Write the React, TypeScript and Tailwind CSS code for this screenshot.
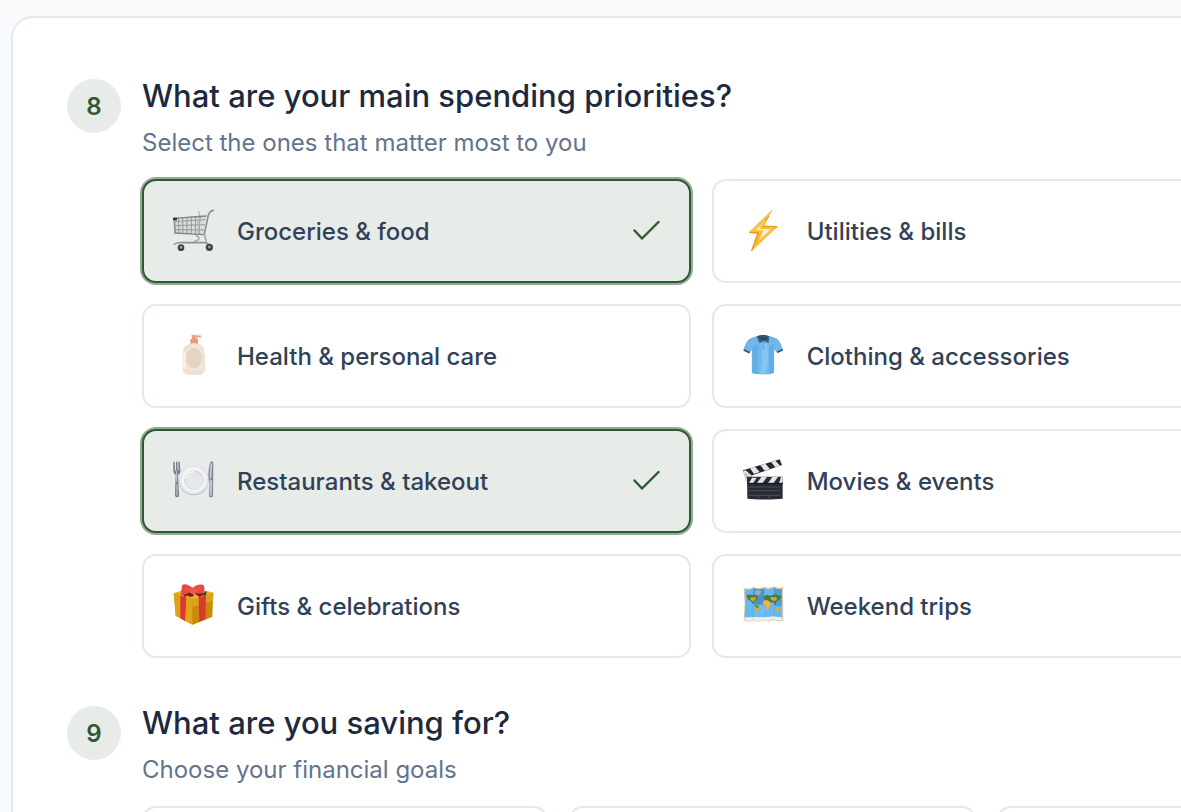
import { useState, type ReactNode } from "react";

const Picture = ({ children }: { children: ReactNode }) => (
	<svg viewBox="36 42 132 132" className="size-11 shrink-0" fill="none" aria-hidden="true">
		{children}
	</svg>
);

const CartIcon = () => (
	<Picture>
		<path d="M43 68 140 61 131 119 45 114Z" fill="#d3d8d3" fillOpacity=".7" />
		<path d="M42 80 137 74M43 92 135 89M44 104 133 105M55 68l2 46M68 67l1 48M81 66v50M94 65v51M107 64l-1 53M120 63l-3 55" stroke="#92999a" strokeWidth="3" />
		<path d="M116 48l4 22-5 48M120 62l-9 28" stroke="#a9b0ae" strokeWidth="3" />
		<path d="M42 70 139 63M44 114 131 119" stroke="#7d8587" strokeWidth="4" />
		<path d="M43 70l2 44M160 46c-7 1-12 6-15 14l-12 58" stroke="#8b9295" strokeWidth="5" strokeLinecap="round" />
		<path d="M107 119c5 6 12 7 10 12-2 6-10 5-14 10M133 118l6 22" stroke="#a3aaa8" strokeWidth="5" />
		<path d="M43 148c5-6 18-6 32-5h57c10 0 14 2 15 11" stroke="#8d9497" strokeWidth="5" strokeLinecap="round" />
		<rect x="39" y="68" width="12" height="8" rx="1" fill="#25305a" />
		<circle cx="63" cy="158" r="10" fill="#41464e" />
		<circle cx="63" cy="157" r="4" fill="#9aa1ab" />
		<circle cx="148" cy="157" r="11" fill="#41464e" />
		<circle cx="148" cy="156" r="4" fill="#9aa1ab" />
	</Picture>
);

const BoltIcon = () => (
	<Picture>
		<path d="M126 46 101 93 142 95 65 167 82 115 57 112Z" fill="#fcc43a" stroke="#e9b64d" strokeWidth="2" strokeLinejoin="round" />
		<path d="M117 63 74 107 94 109 80 147 126 101 93 99Z" fill="#fbd768" stroke="#f0a524" strokeWidth="3" strokeLinejoin="round" />
		<path d="M104 76 76 105 98 106 88 135 124 101 92 100Z" fill="#f6f1e2" />
		<path d="M106 76 90 99 126 102M76 106 97 108 84 143" stroke="#fbc73f" strokeWidth="5" strokeLinejoin="round" />
		<path d="M99 94 142 95M57 112 85 114 65 167" stroke="#e79a1e" strokeWidth="4" strokeLinejoin="round" />
	</Picture>
);

const LotionIcon = () => (
	<Picture>
		<path d="M94 47c0-3 5-3 9-3 9 0 19 0 22 4l-3 6c-3-3-8-3-12-2v9H96v-9Z" fill="#f0a283" />
		<path d="M108 46c7-1 14 0 16 3" stroke="#ffd5b7" strokeWidth="4" strokeLinecap="round" />
		<path d="M91 58c4-3 19-3 23 0v15H91Z" fill="#ee9676" />
		<path d="M83 74c8-6 31-6 39 0 9 5 12 15 12 30v43c0 13-9 18-20 18H88c-12 0-20-5-20-18v-43c0-15 4-25 15-30Z" fill="#f1e5d9" />
		<path d="M72 97c3-14 10-20 20-21M133 103v43c0 10-7 17-20 18" stroke="#dfcebc" strokeWidth="2" />
		<ellipse cx="102" cy="114" rx="24" ry="31" fill="#e5d4c6" />
		<path d="M77 148c14 10 36 12 50 0v7c-8 9-42 9-50 0Z" fill="#ebdccd" />
		<path d="M100 103v8M92 136l5-1M104 151h7" stroke="#d8dcdc" strokeWidth="3" />
		<path d="M73 97v48" stroke="#fbf3e9" strokeWidth="5" />
	</Picture>
);

const ShirtIcon = () => (
	<Picture>
		<path d="M82 49 58 58C49 66 45 80 41 91l17 7 9-13v73c14 5 51 5 64 0V84l11 14 16-8c-6-14-9-27-18-33l-23-8Z" fill="#70b7ec" stroke="#559acf" strokeWidth="2" />
		<path d="M67 83v75l15 3 2-92ZM117 85l14-15v88l-13 3Z" fill="#62aee6" />
		<path d="M95 68l16 2 4 46-6 45H90l6-28Z" fill="#83c6f5" />
		<path d="M42 90l17 8M142 97l16-8" stroke="#30536f" strokeWidth="5" />
		<path d="M81 49c9-5 29-5 36 0l-2 18-14-5-12 7Z" fill="#345571" />
		<path d="M86 52c8 4 20 4 27 0l-11 8Z" fill="#1f3d56" />
		<path d="M82 51l7 15 12-5M116 51l-2 15-13-5" stroke="#426d91" strokeWidth="4" />
		<path d="M100 64v25" stroke="#4c91c6" strokeWidth="3" />
		<path d="M99 74h2M99 86h2M100 104h2M91 116h2" stroke="#ead9a9" strokeWidth="2" />
	</Picture>
);

const PlateIcon = () => (
	<Picture>
		<circle cx="101" cy="106" r="45" fill="#b8bcc4" />
		<circle cx="101" cy="104" r="44" fill="#e7e8ed" />
		<circle cx="101" cy="104" r="37" fill="#f4f4f7" />
		<circle cx="102" cy="105" r="29" fill="#d0d2d9" />
		<circle cx="103" cy="107" r="26" fill="#e6e7ec" />
		<path d="M77 101c2-14 13-21 26-21" stroke="#fff" strokeWidth="4" />
		<path d="M40 50v26c0 8 4 11 7 13l-2 61c0 9 12 9 12 0l-3-61c6-2 8-6 7-13l-2-26h-4l1 26h-3l-1-26h-4v26h-3l-1-26Z" fill="#737c88" />
		<path d="M48 76l2 10v25M51 117v35" stroke="#cdd3dc" strokeWidth="3" />
		<path d="M149 58c2-11 11-13 11 0l-1 95c0 5-11 5-12 0l2-42c-6-9-4-34 0-53Z" fill="#7e8895" />
		<path d="M154 55l-3 50 3 5-2 42" stroke="#cbd1d9" strokeWidth="5" />
		<path d="M148 102h10" stroke="#6f7986" strokeWidth="3" />
	</Picture>
);

const ClapperIcon = () => (
	<Picture>
		<path d="M39 76 149 43l7 17L46 98Z" fill="#22262e" />
		<path d="M60 70l15-5 14 16-17 6ZM91 61l15-5 14 16-16 5ZM123 51l14-4 13 15-14 5ZM40 78l7-2 16 14-17 7Z" fill="#e7e7e7" />
		<path d="M40 79l7 31 25-1-9-20Z" fill="#dadada" />
		<path d="M47 85l4 16 13 2" stroke="#a0a2a5" strokeWidth="3" />
		<path d="M51 95h107v66c-25 3-80 3-106 0Z" fill="#272b34" />
		<path d="M94 96h17l-13 18H81ZM127 96h17l-13 18h-17ZM153 96h5v14l-3 4h-8ZM66 98h14l-10 16H57Z" fill="#e4e4e5" />
		<path d="M55 126h96M55 137h96M55 151h96M86 151v9M118 151v9" stroke="#5b616d" strokeWidth="2" />
		<path d="M51 115h107" stroke="#11151d" strokeWidth="3" />
	</Picture>
);

const GiftIcon = () => (
	<Picture>
		<path d="M41 71 97 52l63 17-4 71-58 24-51-27Z" fill="#d7960d" />
		<path d="M47 93 97 108v56l-50-27Z" fill="#e2a21a" />
		<path d="M97 108 157 91v49l-60 24Z" fill="#c88a0b" />
		<path d="M41 69 97 53l63 15-59 20Z" fill="#f0b22b" />
		<path d="M41 70 97 87v23L43 94ZM98 88l62-19-1 23-61 18Z" fill="#dfa11c" />
		<path d="M61 76l17 6v24l-3 47-14-8ZM116 82l22-6-2 72-18 7Z" fill="#dd3733" />
		<path d="M60 71 112 50l15 4-48 25ZM80 56l12-4 44 20-18 8Z" fill="#bd292a" />
		<path d="M66 46c9-8 22 1 32 8 10-12 29-13 33-8 4 10 3 20-3 24-11 4-23 0-31-2-9 8-25 12-32 4-5-8 2-16 1-26Z" fill="#e94843" />
		<path d="M69 74c9 3 17-9 25-7l9 11-14 3-6-5-9 4ZM103 70l16 10 15-8" fill="#6b2423" />
		<path d="M86 59l8-6 14 1 5 10-9 8-13-2Z" fill="#f55550" />
		<path d="M129 69l11-6-1 13-10 1Z" fill="#315a2b" />
		<path d="M75 53l8 6M115 54l8-4" stroke="#f5655b" strokeWidth="3" />
	</Picture>
);

const MapIcon = () => (
	<Picture>
		<path d="M41 53c11 4 21 4 29-2 12 4 22 5 33-1 9 5 20 4 29-1 8 5 18 5 28 2-2 13-2 26-1 37l1 64c-10 3-19 2-29-3-9 5-20 6-29 2-10 5-22 5-32 0-10 5-20 5-29 0l3-50Z" fill="#dcc3a0" />
		<path d="M46 58c9 2 17 1 24-3 12 4 22 4 33 0 9 4 20 3 29-1 8 4 16 4 23 3v85H44l2-41Z" fill="#68b8ed" />
		<path d="M70 55c11 4 22 4 33 0v50c-11 5-22 5-33 0Z" fill="#4a93c9" />
		<path d="M70 104h33v39H70Z" fill="#72bdf0" />
		<path d="M132 54c8 4 16 4 23 3v51h-23Z" fill="#4f9fd6" />
		<path d="M49 76c8-6 17 1 27-1l8 7-4 9-8 2-3 9-7-10-8-3Z" fill="#537b3a" />
		<path d="M60 84l14-3 4 5-10 9-6-7Z" fill="#daac37" />
		<path d="M72 64l14-4 8 4-7 12-10-2Z" fill="#93b2c1" />
		<path d="M75 105l12 3 1 9-7 11-4-11Z" fill="#e2a92f" />
		<path d="M75 105l11 3-1 6-8-2Z" fill="#54843a" />
		<path d="M99 81l11-7 12 3 13-4 20 6-7 12-9 2-2 12-8-9-7 4-5-6-13-4Z" fill="#4c7b37" />
		<path d="M99 93l13-3 11 8-3 11-8 13-6-16-8-5Z" fill="#f0b43b" />
		<path d="M122 81l16 1 3 6-8 6-9-5Z" fill="#d4ac3e" />
		<path d="M135 118l9-6 5 7-4 5-9-1Z" fill="#e5ac36" />
		<path d="M44 143l25-2 34 1 29-3 25 4v7c-10 2-19 1-27-3-9 5-20 6-29 2-10 5-22 5-32 0-9 4-17 4-25 1Z" fill="#eef1f2" />
		<path d="M70 53v96M132 51v96" stroke="#3279aa" strokeOpacity=".3" strokeWidth="2" />
	</Picture>
);

const priorities = [
	{ label: "Groceries & food", icon: CartIcon },
	{ label: "Utilities & bills", icon: BoltIcon },
	{ label: "Health & personal care", icon: LotionIcon },
	{ label: "Clothing & accessories", icon: ShirtIcon },
	{ label: "Restaurants & takeout", icon: PlateIcon },
	{ label: "Movies & events", icon: ClapperIcon },
	{ label: "Gifts & celebrations", icon: GiftIcon },
	{ label: "Weekend trips", icon: MapIcon },
];

const Question = ({ number, title, hint, children }: { number: number; title: string; hint: string; children: ReactNode }) => (
	<section className="flex items-start gap-[21px]">
		<div className="flex size-[54px] shrink-0 items-center justify-center rounded-full bg-[#e8ece8] pt-0.5 text-2xl font-semibold text-[#2d5a2f]">
			{number}
		</div>
		<div className="min-w-0 flex-1">
			<h2 className="text-[31px] leading-[34px] font-medium text-slate-800">{title}</h2>
			<p className="mt-[14px] mb-5 text-2xl leading-8 text-slate-500">{hint}</p>
			{children}
		</div>
	</section>
);

export default function App() {
	const [selected, setSelected] = useState(["Groceries & food", "Restaurants & takeout"]);

	const toggle = (label: string) =>
		setSelected((prev) => (prev.includes(label) ? prev.filter((item) => item !== label) : [...prev, label]));

	return (
		<main className="h-screen overflow-hidden bg-slate-50 pt-4 pl-[11px] font-[Inter,sans-serif]">
			{/* The form is wider than the visible area and runs off its right edge */}
			<div className="min-h-full w-[160%] space-y-12 rounded-[22px] border-2 border-slate-200 bg-white pt-[61px] pr-[51px] pb-12 pl-[54px]">
				<Question number={8} title="What are your main spending priorities?" hint="Select the ones that matter most to you">
					<div className="grid grid-cols-3 gap-[21px]">
						{priorities.map(({ label, icon: Icon }) => {
							const active = selected.includes(label);
							return (
								<button
									key={label}
									type="button"
									aria-pressed={active}
									onClick={() => toggle(label)}
									className={`flex h-[104px] items-center gap-[21px] rounded-[14px] border-2 px-7 text-left text-2xl font-medium text-slate-700 odd:col-start-1 even:col-start-2 ${
										active ? "border-[#2d5a2f] bg-[#e8ece8] shadow-sm ring-2 ring-[#96a897]" : "border-slate-200 bg-white"
									}`}>
									<Icon />
									<span className="flex-1 pt-0.5">{label}</span>
									{active && (
										<svg viewBox="0 0 28 28" className="size-7 shrink-0" fill="none" stroke="#2d5a2f" strokeWidth="2.4" strokeLinecap="round" strokeLinejoin="round" aria-hidden="true">
											<path d="M1.5 13.5 9 21.5 25.5 5" />
										</svg>
									)}
								</button>
							);
						})}
					</div>
				</Question>

				<Question number={9} title="What are you saving for?" hint="Choose your financial goals">
					<div className="grid grid-cols-4 gap-[21px]">
						{[0, 1, 2].map((slot) => (
							<div key={slot} className="h-[104px] rounded-[14px] border-2 border-slate-200 bg-white" />
						))}
					</div>
				</Question>
			</div>
		</main>
	);
}
